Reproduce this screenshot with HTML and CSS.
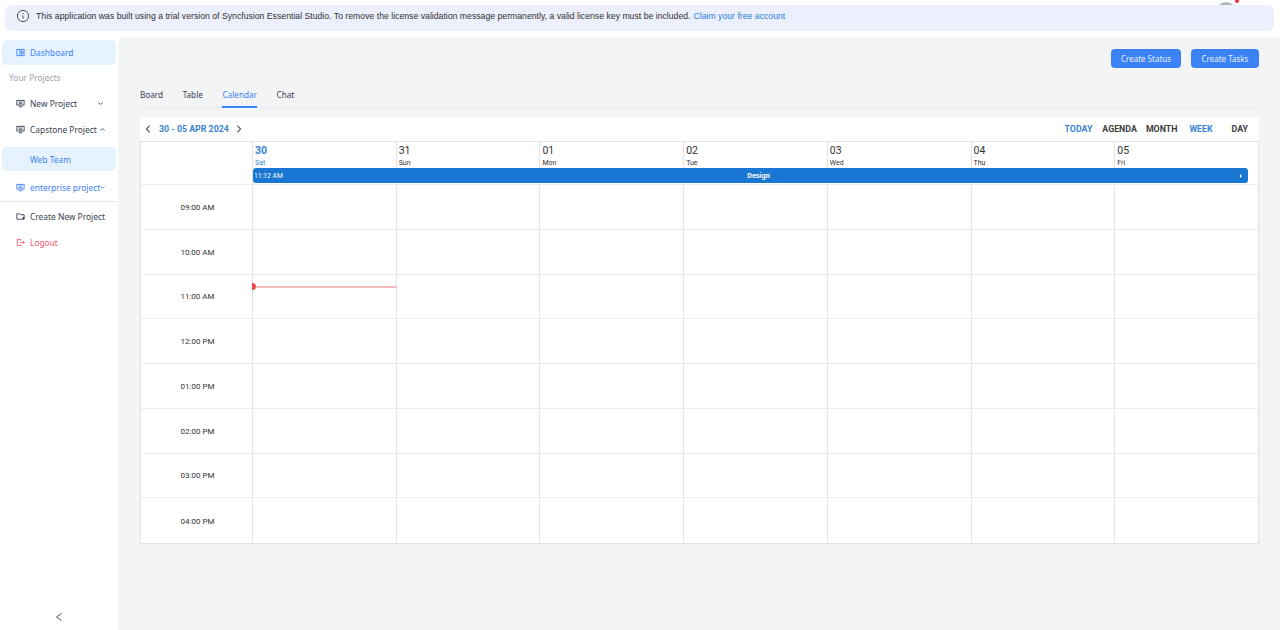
FILE: index.html
```html
<!DOCTYPE html>
<html>
<head>
    <title>Calendar</title>
    <link rel="stylesheet" href="styles.css">
</head>
<body>
<div class="avatar"></div>
<div class="avatarDot"></div>

<div class="licenseBanner">
    <svg class="infoIcon" viewBox="0 0 14 14"><circle cx="7" cy="7" r="5.6"/><path d="M7 6.4v3.4M7 4.2v1"/></svg>
    <span>This application was built using a trial version of Syncfusion Essential Studio. To remove the license validation message permanently, a valid license key must be included.</span>
    <a class="licenseLink">Claim your free account</a>
</div>

<div class="layout">
    <div class="sidebar">
        <div class="navItem navActive">
            <svg class="navIcon" viewBox="0 0 10 10"><rect x="1" y="1.5" width="3.4" height="7"/><rect x="5.8" y="1.5" width="3.2" height="3"/><rect x="5.8" y="5.6" width="3.2" height="2.9"/></svg>
            <span>Dashboard</span>
        </div>
        <div class="navHeading">Your Projects</div>
        <div class="navItem">
            <svg class="navIcon" viewBox="0 0 10 10"><rect x="1" y="1.5" width="8" height="5.2"/><path d="M3 5.2h4M3 3.4h4M3 8.6h4"/></svg>
            <span>New Project</span>
            <svg class="caret caretNew" viewBox="0 0 8 8"><path d="M1.5 3l2.5 2 2.5-2"/></svg>
        </div>
        <div class="navItem">
            <svg class="navIcon" viewBox="0 0 10 10"><rect x="1" y="1.5" width="8" height="5.2"/><path d="M3 5.2h4M3 3.4h4M3 8.6h4"/></svg>
            <span>Capstone Project</span>
            <svg class="caret" viewBox="0 0 8 8"><path d="M1.5 5l2.5-2 2.5 2"/></svg>
        </div>
        <div class="subItem">Web Team</div>
        <div class="navItem navProject">
            <svg class="navIcon" viewBox="0 0 10 10"><rect x="1" y="1.5" width="8" height="5.2"/><path d="M3 5.2h4M3 3.4h4M3 8.6h4"/></svg>
            <span>enterprise project</span>
            <svg class="caret caretTight" viewBox="0 0 8 8"><path d="M1.5 3l2.5 2 2.5-2"/></svg>
        </div>
        <div class="navDivider"></div>
        <div class="navItem navCreate">
            <svg class="navIcon" viewBox="0 0 10 10"><path d="M1 8V2h3l1 1h4v5H1z"/><path d="M7 6.8h2.6M8.3 5.5v2.6"/></svg>
            <span>Create New Project</span>
        </div>
        <div class="navItem navLogout">
            <svg class="navIcon" viewBox="0 0 10 10"><path d="M5.5 3V1.5H1.5v7h4V7"/><path d="M4.5 5h4.8M7.8 3.6L9.3 5 7.8 6.4"/></svg>
            <span>Logout</span>
        </div>
        <svg class="collapseIcon" viewBox="0 0 10 10"><path d="M7.5 1.5L2.5 5l5 3.5"/></svg>
    </div>

    <div class="mainArea">
        <div class="actions">
            <button class="actionBtn btnStatus">Create Status</button>
            <button class="actionBtn btnTasks">Create Tasks</button>
        </div>

        <div class="tabs">
            <span class="tab">Board</span>
            <span class="tab">Table</span>
            <span class="tab tabActive">Calendar</span>
            <span class="tab">Chat</span>
        </div>

        <div class="calendar">
            <div class="toolbar">
                <svg class="arrow" viewBox="0 0 8 10"><path d="M5.6 1.6L2.4 5l3.2 3.4"/></svg>
                <span class="dateRange">30 - 05 APR 2024</span>
                <svg class="arrow" viewBox="0 0 8 10"><path d="M2.4 1.6L5.6 5 2.4 8.4"/></svg>
                <div class="views">
                    <span class="view viewOn viewToday">TODAY</span>
                    <span class="view viewAgenda">AGENDA</span>
                    <span class="view viewMonth">MONTH</span>
                    <span class="view viewOn viewWeek">WEEK</span>
                    <span class="view viewDay">DAY</span>
                </div>
            </div>

            <div class="grid">
                <div class="headCorner"></div>
                <div class="dayHead dayToday"><b>30</b><small>Sat</small></div>
                <div class="dayHead"><b>31</b><small>Sun</small></div>
                <div class="dayHead"><b>01</b><small>Mon</small></div>
                <div class="dayHead"><b>02</b><small>Tue</small></div>
                <div class="dayHead"><b>03</b><small>Wed</small></div>
                <div class="dayHead"><b>04</b><small>Thu</small></div>
                <div class="dayHead"><b>05</b><small>Fri</small></div>
                <div class="eventBar">
                    <span class="eventTime">11:12 AM</span>
                    <span class="eventTitle">Design</span>
                    <span class="eventMore"></span>
                </div>

                <div class="timeCell">09:00 AM</div>
                <div class="cell"></div><div class="cell"></div><div class="cell"></div><div class="cell"></div><div class="cell"></div><div class="cell"></div><div class="cell"></div>
                <div class="timeCell">10:00 AM</div>
                <div class="cell"></div><div class="cell"></div><div class="cell"></div><div class="cell"></div><div class="cell"></div><div class="cell"></div><div class="cell"></div>
                <div class="timeCell">11:00 AM</div>
                <div class="cell nowCell"><div class="nowLine"></div><div class="nowDot"></div></div><div class="cell"></div><div class="cell"></div><div class="cell"></div><div class="cell"></div><div class="cell"></div><div class="cell"></div>
                <div class="timeCell">12:00 PM</div>
                <div class="cell"></div><div class="cell"></div><div class="cell"></div><div class="cell"></div><div class="cell"></div><div class="cell"></div><div class="cell"></div>
                <div class="timeCell">01:00 PM</div>
                <div class="cell"></div><div class="cell"></div><div class="cell"></div><div class="cell"></div><div class="cell"></div><div class="cell"></div><div class="cell"></div>
                <div class="timeCell">02:00 PM</div>
                <div class="cell"></div><div class="cell"></div><div class="cell"></div><div class="cell"></div><div class="cell"></div><div class="cell"></div><div class="cell"></div>
                <div class="timeCell">03:00 PM</div>
                <div class="cell"></div><div class="cell"></div><div class="cell"></div><div class="cell"></div><div class="cell"></div><div class="cell"></div><div class="cell"></div>
                <div class="timeCell">04:00 PM</div>
                <div class="cell"></div><div class="cell"></div><div class="cell"></div><div class="cell"></div><div class="cell"></div><div class="cell"></div><div class="cell"></div>
            </div>
        </div>
    </div>
</div>
</body>
</html>
```

FILE: styles.css
```css
html, body {
    margin: 0;
    height: 630px;
    overflow: hidden;
    background-color: white;
    font-family: "Noto Sans", Inter, sans-serif;
    color: #374151;
}

/* Top banner */
.avatar {
    position: absolute;
    left: 1216px;
    top: 2px;
    width: 20px;
    height: 20px;
    border-radius: 50%;
    background-color: #b4b8bf;
}
.avatarDot {
    position: absolute;
    left: 1235px;
    top: -1px;
    width: 4px;
    height: 4px;
    border-radius: 50%;
    background-color: #ef3340;
}
.licenseBanner {
    position: relative;
    display: flex;
    align-items: center;
    box-sizing: border-box;
    height: 26px;
    margin: 5px 6px 6px 5px;
    padding: 0 0 4px 11px;
    border-radius: 6px;
    background-color: #eceffc;
    font: 8.7px "Liberation Sans", Arial, sans-serif;
    color: #333333;
}
.infoIcon {
    width: 14px;
    height: 14px;
    margin-right: 6px;
    fill: none;
    stroke: #4b5563;
    stroke-width: 1;
}
.licenseLink {
    margin-left: 3px;
    color: #2b7de0;
}

.layout {
    display: flex;
    height: 593px;
}

/* Sidebar */
.sidebar {
    position: relative;
    width: 118px;
    flex: none;
    padding-top: 3px;
    box-sizing: border-box;
    font-size: 8.4px;
}
.navItem {
    display: flex;
    align-items: center;
    box-sizing: border-box;
    height: 26px;
    margin: 0 2px;
    padding: 0 0 1px 14px;
    color: #374151;
}
.navActive {
    height: 25px;
    padding-bottom: 0;
    border-radius: 5px;
    background-color: #e6f3ff;
    color: #3b82f6;
}
.navIcon {
    width: 9px;
    height: 9px;
    margin-right: 5px;
    flex: none;
    fill: none;
    stroke: currentColor;
    stroke-width: 1;
}
.navHeading {
    height: 26px;
    padding-left: 9px;
    line-height: 26px;
    color: #9ca3af;
}
.caret {
    width: 7px;
    height: 7px;
    margin-left: 2px;
    fill: none;
    stroke: currentColor;
    stroke-width: 0.9;
}
.caretNew {
    margin-left: 20px;
}
.caretTight {
    margin-left: -1px;
}
.subItem {
    height: 24px;
    margin: 4px 2px;
    padding-left: 28px;
    border-radius: 5px;
    background-color: #e6f3ff;
    color: #3b82f6;
    line-height: 25px;
}
.navProject {
    color: #3b82f6;
}
.navDivider {
    height: 1px;
    margin-bottom: 2px;
    background-color: #e5e7eb;
}
.navLogout {
    color: #f4566a;
}
.collapseIcon {
    position: absolute;
    left: 54px;
    bottom: 8px;
    width: 10px;
    height: 10px;
    fill: none;
    stroke: #4b5563;
    stroke-width: 1;
}

/* Main area */
.mainArea {
    flex: 1;
    padding: 12px 21px 0 22px;
    border-top-left-radius: 6px;
    background-color: #f3f4f6;
}
.actions {
    display: flex;
    justify-content: flex-end;
    gap: 10px;
}
.actionBtn {
    height: 19px;
    padding: 0;
    border: none;
    border-radius: 4px;
    background-color: #3b82f6;
    color: #e8f1ff;
    font: 8px "Noto Sans", sans-serif;
}
.btnStatus {
    width: 70px;
}
.btnTasks {
    width: 68px;
}
.tabs {
    display: flex;
    gap: 19.5px;
    height: 20px;
    margin-top: 19px;
    border-bottom: 1px solid #e7e8eb;
    font-size: 8.2px;
    line-height: 15px;
}
.tab {
    height: 20px;
}
.tabActive {
    height: 19px;
    border-bottom: 2px solid #3b82f6;
    color: #3b82f6;
}

/* Calendar */
.calendar {
    margin-top: 9px;
    border-radius: 4px 4px 0 0;
    background-color: white;
    font-family: Roboto, sans-serif;
}
.toolbar {
    display: flex;
    align-items: center;
    height: 24px;
    padding-left: 4px;
}
.arrow {
    width: 8px;
    height: 10px;
    fill: none;
    stroke: #4b5563;
    stroke-width: 1.1;
}
.dateRange {
    margin: 0 6px 0 7px;
    font-size: 8.8px;
    font-weight: 700;
    color: #3a83d4;
}
.views {
    display: flex;
    margin-left: auto;
}
.view {
    font-size: 8.8px;
    font-weight: 700;
    color: #3d3d3d;
}
.viewOn {
    color: #3a83d4;
}
.viewAgenda {
    margin-left: 10px;
}
.viewMonth {
    margin-left: 9px;
}
.viewWeek {
    margin-left: 12px;
}
.viewDay {
    margin-left: 19px;
    margin-right: 11px;
}
.grid {
    position: relative;
    display: grid;
    grid-template-columns: 111px repeat(7, 1fr);
    grid-template-rows: 43px repeat(8, 44.75px);
    border: 1px solid #e3e3e3;
}
.headCorner {
    border-bottom: 1px solid #ececec;
}
.dayHead {
    padding: 3px 2px 0;
    border-left: 1px solid #e3e3e3;
    border-bottom: 1px solid #ececec;
    color: #333333;
}
.dayHead b {
    display: block;
    font-size: 10.5px;
    font-weight: 400;
    line-height: 12px;
}
.dayHead small {
    display: block;
    margin-top: 2px;
    font-size: 7px;
    line-height: 8px;
}
.dayToday {
    color: #2f7fd6;
}
.dayToday b {
    font-weight: 700;
}
.eventBar {
    position: absolute;
    left: 112px;
    right: 10px;
    top: 26px;
    height: 15px;
    display: flex;
    align-items: center;
    border-radius: 3px;
    background-color: #1976d2;
    color: white;
    font-size: 6.8px;
}
.eventTime {
    padding-left: 1px;
}
.eventTitle {
    position: absolute;
    left: 16px;
    right: 0;
    text-align: center;
    font-size: 7.3px;
    font-weight: 700;
}
.eventMore {
    position: absolute;
    right: 6px;
    border-left: 2px solid white;
    border-top: 2px solid transparent;
    border-bottom: 2px solid transparent;
}
.timeCell {
    display: flex;
    align-items: center;
    justify-content: center;
    padding: 1px 0 0 2px;
    border-bottom: 1px solid #ececec;
    font-size: 8px;
    color: #333333;
}
.cell {
    border-left: 1px solid #e3e3e3;
    border-bottom: 1px solid #ececec;
}
.timeCell:nth-last-child(8),
.cell:nth-last-child(-n+7) {
    border-bottom: none;
}
.nowCell {
    position: relative;
}
.nowLine {
    position: absolute;
    left: 0;
    right: -1px;
    top: 11px;
    height: 2px;
    background-color: #f7bcbc;
}
.nowDot {
    position: absolute;
    left: -1px;
    top: 8px;
    width: 4px;
    height: 7px;
    border-radius: 0 4px 4px 0;
    background-color: #ea4a4a;
}
```
